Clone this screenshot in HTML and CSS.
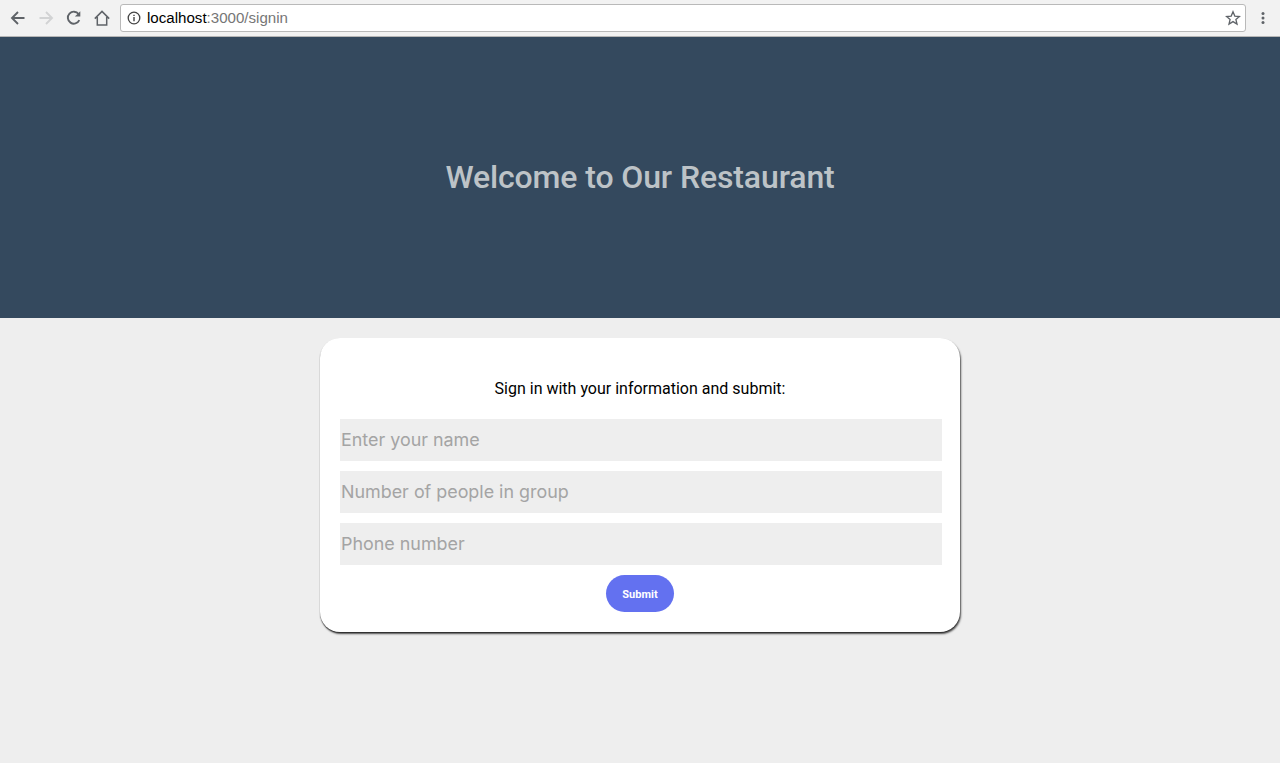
FILE: index.html
```html
<!DOCTYPE html>
<html lang="en">
<head>
<meta charset="utf-8">
<title>Sign in</title>
<link rel="stylesheet" href="styles.css">
</head>
<body>
<div class="toolbar">
  <svg class="nav" width="18" height="18" viewBox="0 0 18 18"><path d="M15.5 9H3.2M9 3 3 9l6 6" fill="none" stroke="#5f6368" stroke-width="1.9"/></svg>
  <svg class="nav" width="18" height="18" viewBox="0 0 18 18"><path d="M2.5 9h12.3M9 3l6 6-6 6" fill="none" stroke="#d2d3d4" stroke-width="1.9"/></svg>
  <svg class="nav" width="18" height="18" viewBox="0 0 18 18"><path d="M14.3 11.2A6 6 0 1 1 13.6 5" fill="none" stroke="#5f6368" stroke-width="1.9"/><path d="M15.3 2.2v5.4H9.9z" fill="#5f6368"/></svg>
  <svg class="nav home" width="18" height="18" viewBox="0 0 18 18"><path d="M1.8 9.6 9 2.4l7.2 7.2M4.3 8v8h9.4V8" fill="none" stroke="#5f6368" stroke-width="1.5"/></svg>
  <div class="omnibox">
    <svg width="14" height="14" viewBox="0 0 14 14"><circle cx="7" cy="7" r="5.8" fill="none" stroke="#444" stroke-width="1.3"/><path d="M7 6.1v4.2M7 3.7v1.4" stroke="#444" stroke-width="1.4"/></svg>
    <span class="url"><span class="host">localhost</span>:3000/signin</span>
    <svg class="star" width="16" height="16" viewBox="0 0 16 16"><path d="m8 1.8 1.8 4.3 4.6.4-3.5 3 1.1 4.6L8 11.6l-4 2.5 1.1-4.6-3.5-3 4.6-.4z" fill="none" stroke="#5f6368" stroke-width="1.3"/></svg>
  </div>
  <svg class="menu" width="4" height="14" viewBox="0 0 4 14"><circle cx="2" cy="2.5" r="1.5" fill="#5f6368"/><circle cx="2" cy="7" r="1.5" fill="#5f6368"/><circle cx="2" cy="11.5" r="1.5" fill="#5f6368"/></svg>
</div>
<header class="hero">
  <h1 class="title">Welcome to Our Restaurant</h1>
</header>
<main class="content">
  <form class="card">
    <p class="intro">Sign in with your information and submit:</p>
    <input class="field" type="text" placeholder="Enter your name">
    <input class="field" type="text" placeholder="Number of people in group">
    <input class="field" type="text" placeholder="Phone number">
    <button class="submit" type="button">Submit</button>
  </form>
</main>
</body>
</html>
```
FILE: styles.css
```css
* { box-sizing: border-box; }
html, body { height: 100%; }
body {
  margin: 0;
  display: flex;
  flex-direction: column;
  background: #eeeeee;
  font-family: Roboto, "Liberation Sans", sans-serif;
  overflow: hidden;
}
.toolbar {
  flex: none;
  height: 37px;
  display: flex;
  align-items: center;
  padding: 0 15px 0 9px;
  background: #f2f2f2;
  border-bottom: 1px solid #b6b6b6;
}
.nav { flex: none; margin-right: 10px; }
.home { margin-right: 9px; }
.omnibox {
  flex: 1;
  height: 28px;
  display: flex;
  align-items: center;
  gap: 6px;
  padding: 0 4px 0 6px;
  background: #fff;
  border: 1px solid #b9b9b9;
  border-radius: 3px;
}
.url {
  flex: 1;
  padding-bottom: 1px;
  font-family: "Liberation Sans", sans-serif;
  font-size: 15.1px;
  color: #767676;
}
.host { color: #000; }
.menu { flex: none; margin-left: 15px; }
.hero {
  flex: none;
  height: 281px;
  display: flex;
  align-items: center;
  justify-content: center;
  padding-bottom: 2px;
  background: #34495e;
}
.title {
  margin: 0;
  font-size: 32px;
  font-weight: 500;
  letter-spacing: -0.12px;
  color: #bdc3c7;
}
.content {
  flex: 1;
  display: flex;
  justify-content: center;
  align-items: flex-start;
  padding-top: 20px;
}
.card {
  width: 640px;
  height: 294px;
  display: flex;
  flex-direction: column;
  align-items: flex-start;
  gap: 10px;
  padding: 0 18px 0 20px;
  background: #fff;
  border-radius: 20px;
  box-shadow: 1px 2px 2px rgba(0, 0, 0, 0.65), 0 1px 1px rgba(0, 0, 0, 0.5);
}
.intro {
  width: 100%;
  margin: 41px 0 11px;
  padding-right: 2px;
  font-size: 16px;
  line-height: 19px;
  text-align: center;
  color: #000;
}
.field {
  width: 100%;
  height: 42px;
  padding: 0 1px 2px;
  border: 0;
  outline: 0;
  background: #eeeeee;
  font-family: Inter, "Liberation Sans", sans-serif;
  font-size: 17.9px;
}
.field::placeholder { color: #a4a4a4; opacity: 1; }
.submit {
  align-self: center;
  width: 68px;
  height: 37px;
  margin-left: -2px;
  padding: 1px 0 0;
  border: 0;
  border-radius: 19px;
  background: #6371f0;
  color: #fff;
  font-family: Roboto, sans-serif;
  font-size: 11px;
  font-weight: 700;
}
```
